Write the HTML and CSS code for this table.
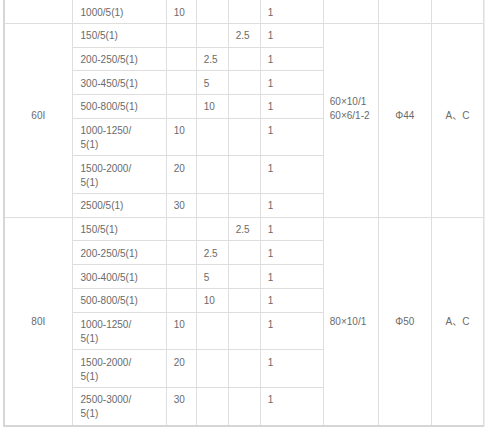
FILE: index.html
```html
<!DOCTYPE html>
<html>
<head>
<meta charset="utf-8">
<link rel="stylesheet" href="styles.css">
</head>
<body>
<div class="wrap">
<table class="spec">
<colgroup>
<col class="c1"><col class="c2"><col class="c3"><col class="c4"><col class="c5"><col class="c6"><col class="c7"><col class="c8"><col class="c9">
</colgroup>
<tbody>
<tr class="first">
<td class="mid"></td><td class="ratio">1000/5(1)</td><td>10</td><td></td><td></td><td>1</td><td class="lead"></td><td class="mid"></td><td class="mid"></td>
</tr>
<tr>
<td class="mid up1" rowspan="7">60I</td><td class="ratio">150/5(1)</td><td></td><td></td><td>2.5</td><td>1</td>
<td class="lead up2" rowspan="7">60×10/1<br>60×6/1-2</td><td class="mid up1" rowspan="7">Φ44</td><td class="mid up1" rowspan="7">A、C</td>
</tr>
<tr><td class="ratio">200-250/5(1)</td><td></td><td>2.5</td><td></td><td>1</td></tr>
<tr><td class="ratio">300-450/5(1)</td><td></td><td>5</td><td></td><td>1</td></tr>
<tr><td class="ratio">500-800/5(1)</td><td></td><td>10</td><td></td><td>1</td></tr>
<tr><td class="ratio">1000-1250/<br>5(1)</td><td>10</td><td></td><td></td><td>1</td></tr>
<tr><td class="ratio">1500-2000/<br>5(1)</td><td>20</td><td></td><td></td><td>1</td></tr>
<tr><td class="ratio">2500/5(1)</td><td>30</td><td></td><td></td><td>1</td></tr>
<tr>
<td class="mid" rowspan="7">80I</td><td class="ratio">150/5(1)</td><td></td><td></td><td>2.5</td><td>1</td>
<td class="lead" rowspan="7">80×10/1</td><td class="mid" rowspan="7">Φ50</td><td class="mid" rowspan="7">A、C</td>
</tr>
<tr><td class="ratio">200-250/5(1)</td><td></td><td>2.5</td><td></td><td>1</td></tr>
<tr><td class="ratio">300-400/5(1)</td><td></td><td>5</td><td></td><td>1</td></tr>
<tr><td class="ratio">500-800/5(1)</td><td></td><td>10</td><td></td><td>1</td></tr>
<tr><td class="ratio">1000-1250/<br>5(1)</td><td>10</td><td></td><td></td><td>1</td></tr>
<tr><td class="ratio">1500-2000/<br>5(1)</td><td>20</td><td></td><td></td><td>1</td></tr>
<tr><td class="ratio">2500-3000/<br>5(1)</td><td>30</td><td></td><td></td><td>1</td></tr>
</tbody>
</table>
</div>
</body>
</html>
```
FILE: styles.css
```css
html, body {
  margin: 0;
  padding: 0;
  background: #fff;
}
body {
  font-family: "Liberation Sans", Arial, "Noto Sans CJK SC", sans-serif;
  font-size: 10px;
  color: #6a6a6a;
}
.wrap {
  margin-top: -3px;
  padding-left: 3px;
  width: 481px;
  border-right: 1px solid #eeeeee;
}
.spec {
  border-collapse: collapse;
  table-layout: fixed;
  width: 481px;
  border-left: 2px solid #d6d6d6;
  border-bottom: 2px solid #d6d6d6;
  border-right: 1px solid #d6d6d6;
}
.c1 { width: 68px; }
.c2 { width: 94px; }
.c3 { width: 30px; }
.c4 { width: 32px; }
.c5 { width: 32px; }
.c6 { width: 63px; }
.c7 { width: 55px; }
.c8 { width: 53px; }
.c9 { width: 52px; }
.spec td {
  border: 1px solid #dedede;
  padding: 5.35px 6px 3.35px 7px;
  line-height: 14px;
  vertical-align: top;
  text-align: left;
  white-space: nowrap;
}
.spec td.ratio {
  padding-left: 8px;
}
.spec td.mid {
  vertical-align: middle;
  text-align: center;
  padding-left: 4px;
  padding-right: 4px;
}
.spec td.lead {
  vertical-align: middle;
  padding-left: 6px;
}
.spec td.up1 {
  padding-bottom: 14.35px;
}
.spec td.up2 {
  padding-bottom: 28.35px;
}
.first td {
  padding-top: 7.65px;
}
```
